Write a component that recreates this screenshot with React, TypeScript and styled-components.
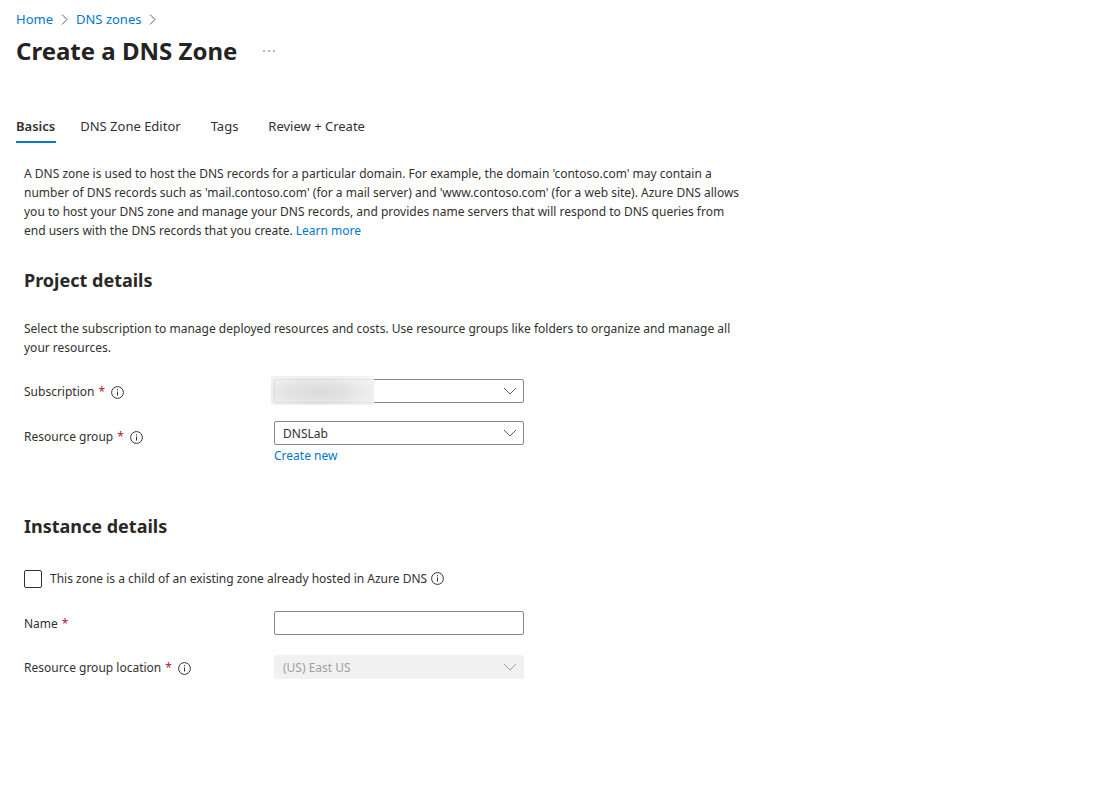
import React from "react";
import styled, { createGlobalStyle } from "styled-components";

const family = '"Noto Sans", sans-serif';

const GlobalStyle = createGlobalStyle`
  * { box-sizing: border-box; }
  body {
    margin: 0;
    background: #fff;
    color: #323130;
    font: 12px/19px ${family};
  }
`;

const Page = styled.div`
  padding: 8px 16px 32px;
`;

const Link = styled.a`
  color: #0078d4;
  text-decoration: none;
`;

const Breadcrumb = styled.nav`
  display: flex;
  align-items: center;
  gap: 8px;
  height: 22px;
  font-size: 13px;
`;

const TitleRow = styled.header`
  display: flex;
  align-items: center;
  gap: 20px;
  height: 42px;
`;

const Title = styled.h1`
  margin: 0;
  font-size: 24px;
  line-height: 32px;
  font-weight: 700;
  color: #242322;
`;

const MoreButton = styled.button`
  display: flex;
  align-items: center;
  justify-content: center;
  width: 24px;
  height: 24px;
  padding: 0;
  border: 0;
  background: none;
  color: #555;
`;

const Tabs = styled.div`
  display: flex;
  gap: 24px;
  margin-top: 36px;
`;

const Tab = styled.button<{ $active?: boolean }>`
  height: 35px;
  padding: 3px ${(p) => (p.$active ? 1 : 6)}px 0 0;
  border: 0;
  border-bottom: 2px solid ${(p) => (p.$active ? "#0078d4" : "transparent")};
  background: none;
  color: #323130;
  font: ${(p) => (p.$active ? 600 : 400)} 13px/19px ${family};
`;

const Content = styled.main`
  max-width: 740px;
  padding: 21px 8px 0;
`;

const Text = styled.p`
  margin: 0;
`;

const Heading = styled.h2<{ $top: number }>`
  margin: ${(p) => p.$top}px 0 27px;
  font-size: 18px;
  line-height: 24px;
  font-weight: 700;
  color: #292827;
`;

const Row = styled.div<{ $gap?: number }>`
  display: grid;
  grid-template-columns: 250px 250px;
  align-items: start;
  margin-top: ${(p) => p.$gap ?? 20}px;
`;

const Label = styled.label<{ $tall?: boolean }>`
  display: flex;
  align-items: center;
  gap: 4px;
  height: ${(p) => (p.$tall ? 30 : 24)}px;
  > svg { margin: 2px 0 0 2px; }
`;

const Star = styled.span`
  color: #a4262c;
`;

const SelectWrap = styled.div`
  display: grid;
  align-items: center;
  height: 24px;
  margin-bottom: 1px;
  > * { grid-area: 1 / 1; }
  > svg { justify-self: end; margin-right: 7px; pointer-events: none; }
`;

const Select = styled.select`
  width: 100%;
  height: 24px;
  padding: 0 8px;
  appearance: none;
  border: 1px solid #8a8886;
  border-radius: 2px;
  background: #fff;
  color: #323130;
  font: 12px/19px ${family};
  opacity: 1;
  &:disabled { border-color: #f1f1f1; background: #f1f1f1; color: #a19f9d; }
`;

const TextBox = styled.input`
  width: 100%;
  height: 24px;
  padding: 0 8px;
  border: 1px solid #8a8886;
  border-radius: 2px;
  font: 12px/19px ${family};
`;

const CheckRow = styled.div`
  display: flex;
  align-items: center;
  gap: 4px;
  margin-top: 31px;
`;

const CheckLabel = styled.label`
  display: flex;
  align-items: center;
  gap: 8px;
`;

const Checkbox = styled.input`
  appearance: none;
  width: 18px;
  height: 18px;
  margin: 0;
  border: 1px solid #323130;
  border-radius: 2px;
`;

const Redaction = styled.span`
  width: 103px;
  height: 29px;
  margin: -3px 0 -2px -3px;
  opacity: 0.88;
  background: radial-gradient(ellipse at 45% 55%, #d6d6d6, #dedede 35%, #ebebeb 65%, #f5f5f5);
`;

const Separator = () => (
  <svg width="7" height="11" viewBox="0 0 7 11" fill="none" stroke="#605e5c" aria-hidden="true">
    <path d="M1 .5 6 5.500 1 10.500" />
  </svg>
);

const Chevron = ({ color = "#605e5c" }: { color?: string }) => (
  <svg width="14" height="8" viewBox="0 0 14 8" fill="none" stroke={color} aria-hidden="true">
    <path d="m1 1 6 6 6-6" />
  </svg>
);

const Info = () => (
  <svg width="13" height="13" viewBox="0 0 13 13" fill="none" stroke="#323130" role="img" aria-label="More information">
    <circle cx="6.500" cy="6.500" r="5.900" />
    <path d="M6.500 5.500v4M6.500 3.200v1.200" />
  </svg>
);

export default function App() {
  return (
    <Page>
      <GlobalStyle />
      <Breadcrumb aria-label="Breadcrumb">
        <Link href="#home">Home</Link><Separator />
        <Link href="#zones">DNS zones</Link><Separator />
      </Breadcrumb>
      <TitleRow>
        <Title>Create a DNS Zone</Title>
        <MoreButton aria-label="More">
          <svg width="12" height="2" viewBox="0 0 12 2" fill="currentColor">
            <circle cx="1" cy="1" r=".8" /><circle cx="6" cy="1" r=".8" /><circle cx="11" cy="1" r=".8" />
          </svg>
        </MoreButton>
      </TitleRow>
      <Tabs role="tablist">
        <Tab role="tab" aria-selected="true" $active>Basics</Tab>
        <Tab role="tab">DNS Zone Editor</Tab>
        <Tab role="tab">Tags</Tab>
        <Tab role="tab">Review + Create</Tab>
      </Tabs>
      <Content>
        <Text>
          A DNS zone is used to host the DNS records for a particular domain. For example, the domain 'contoso.com' may contain a number of DNS records such as 'mail.contoso.com' (for a mail server) and 'www.contoso.com' (for a web site). Azure DNS allows you to host your DNS zone and manage your DNS records, and provides name servers that will respond to DNS queries from end users with the DNS records that you create. <Link href="#learn">Learn more</Link>
        </Text>
        <Heading $top={28}>Project details</Heading>
        <Text>Select the subscription to manage deployed resources and costs. Use resource groups like folders to organize and manage all your resources.</Text>
        <Row $gap={22}>
          <Label htmlFor="subscription">Subscription <Star>*</Star><Info /></Label>
          <SelectWrap><Select id="subscription" /><Redaction /><Chevron /></SelectWrap>
        </Row>
        <Row $gap={17}>
          <Label $tall htmlFor="group">Resource group <Star>*</Star><Info /></Label>
          <div>
            <SelectWrap><Select id="group"><option>DNSLab</option></Select><Chevron /></SelectWrap>
            <Link href="#new">Create new</Link>
          </div>
        </Row>
        <Heading $top={49}>Instance details</Heading>
        <CheckRow>
          <CheckLabel><Checkbox type="checkbox" />This zone is a child of an existing zone already hosted in Azure DNS</CheckLabel>
          <Info />
        </CheckRow>
        <Row $gap={23}>
          <Label htmlFor="name">Name <Star>*</Star></Label>
          <TextBox id="name" />
        </Row>
        <Row>
          <Label htmlFor="location">Resource group location <Star>*</Star><Info /></Label>
          <SelectWrap><Select id="location" disabled><option>(US) East US</option></Select><Chevron color="#a19f9d" /></SelectWrap>
        </Row>
      </Content>
    </Page>
  );
}
